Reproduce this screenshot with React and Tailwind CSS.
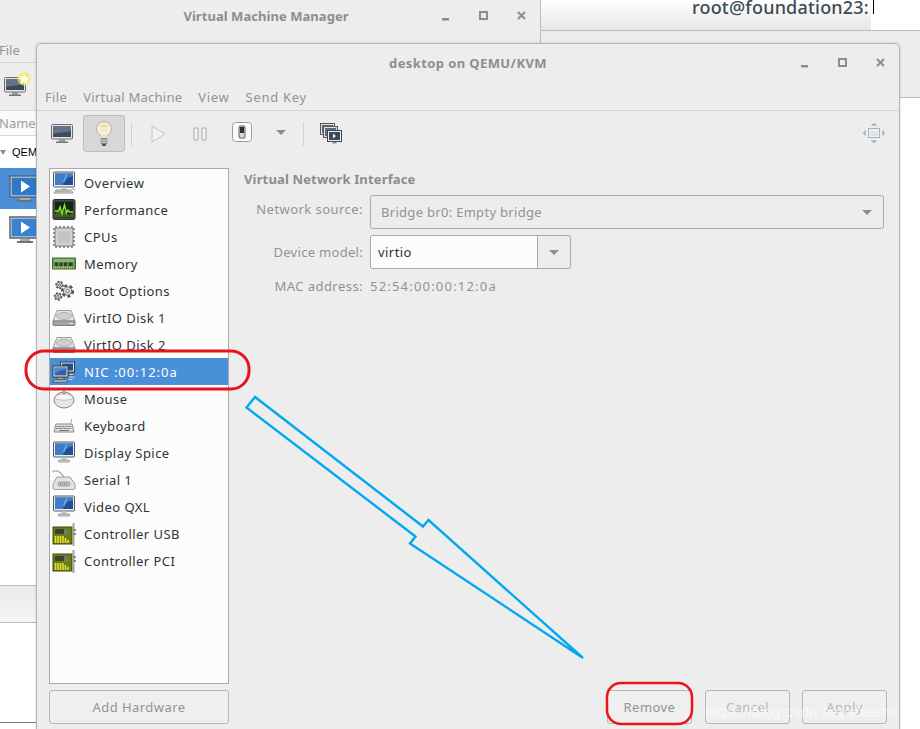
import React from 'react';

const FONT = { fontFamily: '"Noto Sans", "Open Sans", sans-serif' };

/* ---- icons ---- */
const MonitorDark = () => (
  <svg width="24" height="22" viewBox="0 0 24 22">
    <rect x="1.5" y="1.5" width="21" height="14.5" rx="1" fill="#e4e6e8" stroke="#6a6e70" />
    <rect x="3" y="3" width="18" height="11" fill="#3d4a5e" />
    <path d="M3 3h18v5c-6 2-12 1-18 3z" fill="#64738a" />
    <rect x="9" y="16.5" width="6" height="2" fill="#8b8f90" />
    <rect x="6" y="18.5" width="12" height="1.5" fill="#6f7375" />
  </svg>
);

const MonitorBlue = ({ keyboard }) => (
  <svg width="24" height="24" viewBox="0 0 24 24">
    <rect x="1.5" y="1" width="21" height="15" rx="1" fill="#eceeee" stroke="#55595b" />
    <rect x="3" y="2.5" width="18" height="11.5" fill="#1c4f9c" />
    <path d="M3 2.5h18v3c-6 .5-8 3-10 8.500h-8z" fill="#3f7ccb" />
    <path d="M14 3l-3 8h1.500l3-8z" fill="#79a8e0" />
    <rect x="9.500" y="16.500" width="5" height="2.500" fill="#c9cccc" />
    {keyboard ? (
      <>
        <path d="M4 19h15l2 3H2z" fill="#e2e4e4" stroke="#77797a" strokeWidth=".8" />
        <path d="M4.500 20.500h13.500" stroke="#77797a" strokeWidth="1" strokeDasharray="1 1" />
        <path d="M20 18c2 0 3 .5 3.500 1" stroke="#9a9c9c" fill="none" />
      </>
    ) : (
      <rect x="6.500" y="19" width="11" height="2" rx=".5" fill="#dedfdf" stroke="#77797a" strokeWidth=".7" />
    )}
  </svg>
);

const PerformanceIcon = () => (
  <svg width="24" height="24" viewBox="0 0 24 24">
    <rect x="1" y="1.500" width="22" height="20" rx="1.500" fill="#4a4c4a" stroke="#2c2d2c" />
    <rect x="3" y="3.500" width="18" height="16" fill="#14260f" />
    <path d="M3 16l4-4 3 5 3-5 3 5 5-2v4H3z" fill="#3d7a14" opacity=".8" />
    <path d="M3 13h3.500l1.500-4 2 7 2.500-9 2 8 1.500-3 1.500 2h3.500" stroke="#8ae234" strokeWidth="1.400" fill="none" />
  </svg>
);

const ChipIcon = () => (
  <svg width="24" height="24" viewBox="0 0 24 24">
    <path d="M4 1v22M8 1v22M12 1v22M16 1v22M20 1v22M1 4h22M1 8h22M1 12h22M1 16h22M1 20h22" stroke="#6f726f" strokeWidth="1.500" />
    <rect x="3" y="3" width="18" height="18" rx="1" fill="#d2d3d0" stroke="#7a7c78" />
    <rect x="6" y="6" width="12" height="12" fill="#c5c6c3" />
  </svg>
);

const MemoryIcon = () => (
  <svg width="24" height="14" viewBox="0 0 24 14">
    <rect x=".5" y="1" width="23" height="11" fill="#5f9a4a" stroke="#3f6e30" />
    <rect x="2" y="2" width="20" height="3" fill="#84b86f" />
    <path d="M3 5.500h3v3.500H3zM7.500 5.500h3v3.500h-3zM12 5.500h3v3.500h-3zM16.500 5.500h4v3.500h-4z" fill="#3a3a32" />
    <path d="M1 10.500h22" stroke="#d8c46a" strokeWidth="1.500" strokeDasharray="1 1" />
  </svg>
);

const Gear = ({ cx, cy, r }) => (
  <g>
    <circle cx={cx} cy={cy} r={r} fill="none" stroke="#555753" strokeWidth={r * 0.55} strokeDasharray={`${r * 0.55} ${r * 0.45}`} />
    <circle cx={cx} cy={cy} r={r * 0.82} fill="#d9dad8" stroke="#555753" strokeWidth=".8" />
    <circle cx={cx} cy={cy} r={r * 0.32} fill="#fff" stroke="#555753" strokeWidth=".8" />
  </g>
);

const GearsIcon = () => (
  <svg width="22" height="22" viewBox="0 0 22 22">
    <Gear cx={6.500} cy={5} r={3.400} />
    <Gear cx={5} cy={16.500} r={3.400} />
    <Gear cx={14.500} cy={11} r={5.200} />
  </svg>
);

const DiskIcon = () => (
  <svg width="24" height="18" viewBox="0 0 24 18">
    <path d="M5 1.500h14l4 10.500H1z" fill="#e3e4e2" stroke="#9a9c98" />
    <ellipse cx="12" cy="7" rx="7.500" ry="3.500" fill="#cfd0ce" stroke="#b0b2ae" />
    <path d="M1 12h22v3.500a1 1 0 0 1-1 1H2a1 1 0 0 1-1-1z" fill="#a4a6a2" stroke="#7f817d" />
    <path d="M17 14.500h4" stroke="#e8e8e6" />
  </svg>
);

const NicIcon = () => (
  <svg width="24" height="22" viewBox="0 0 24 22">
    <rect x="8.500" y="1" width="14" height="10" fill="#e6e8e8" stroke="#34383a" />
    <rect x="10" y="2.500" width="11" height="7" fill="#1f4e96" />
    <rect x="1" y="5" width="15" height="11" fill="#eceeee" stroke="#34383a" />
    <rect x="2.500" y="6.500" width="12" height="8" fill="#2a62ae" />
    <path d="M2.500 6.500h12v2c-5 0-8 2-12 4z" fill="#4f88d0" />
    <path d="M5 16.500h7v1.500H5zM1.500 19h14v2h-14z" fill="#e4e6e6" stroke="#34383a" strokeWidth=".7" />
    <path d="M17 12.500h5v2h-5z" fill="#e4e6e6" stroke="#34383a" strokeWidth=".7" />
    <path d="M16.500 16h6M16.500 18.500h4" stroke="#d8dada" strokeWidth="1.200" fill="none" />
  </svg>
);

const MouseIcon = () => (
  <svg width="22" height="20" viewBox="0 0 22 20">
    <ellipse cx="11" cy="11" rx="10" ry="8" fill="#e6e6e2" stroke="#8a8c88" />
    <path d="M1.500 9c3-5.500 16-5.500 19 0-5 3-14 3-19 0z" fill="#f6f6f4" stroke="#a8aaa6" strokeWidth=".7" />
    <path d="M11 1v5" stroke="#7d9ac0" strokeWidth="1.200" />
  </svg>
);

const KeyboardIcon = () => (
  <svg width="22" height="16" viewBox="0 0 22 16">
    <path d="M17 5c2-1 2-3 1-4" stroke="#a8aaa6" fill="none" />
    <path d="M3 6h16l2 8H1z" fill="#e0e1de" stroke="#8a8c88" />
    <path d="M3.500 8.500h15M3 10.500h16" stroke="#63655f" strokeWidth="1.200" strokeDasharray="1 .6" />
    <path d="M6 12.500h10" stroke="#7a7c78" strokeWidth="1" />
  </svg>
);

const SerialIcon = () => (
  <svg width="24" height="22" viewBox="0 0 24 22">
    <path d="M0 3c5-3 9 0 13 7" stroke="#b6b8b4" strokeWidth="1.500" fill="none" />
    <path d="M5 8h13l5 7v4a1.500 1.500 0 0 1-1.500 1.500h-19A1.500 1.500 0 0 1 1 19v-4z" fill="#e2e3e0" stroke="#9a9c98" />
    <rect x="6" y="13" width="12" height="4" rx="1.500" fill="#c0c4c8" stroke="#7b8aa0" strokeWidth=".7" />
    <path d="M8 15h8" stroke="#5b6b8a" strokeDasharray="1 1" />
  </svg>
);

const ControllerIcon = () => (
  <svg width="24" height="24" viewBox="0 0 24 24">
    <rect x="1" y="5" width="19" height="17" fill="#6f7c10" stroke="#434a0c" />
    <rect x="3" y="7" width="9" height="5" rx="1" fill="#3c3e38" />
    <path d="M12 8h4v1.500h-4zM12 10.500h4V12h-4z" fill="#5b82b0" />
    <path d="M3.500 21v-7M6 21v-7M8.500 21v-7M11 21v-7M13.500 21v-5M16 21v-3" stroke="#e2e230" strokeWidth="1.600" />
    <path d="M21.500 1v23" stroke="#a4a6a2" strokeWidth="2" />
    <path d="M21.500 8h2.500M21.500 12h2.500" stroke="#6a6c68" strokeWidth="1.500" />
  </svg>
);

const BulbIcon = () => (
  <svg width="18" height="28" viewBox="0 0 18 28">
    <circle cx="9" cy="9" r="7.500" fill="#f2efd4" stroke="#b4b6aa" />
    <path d="M6 7q3-3 6 0" stroke="#e6d85a" strokeWidth="1.600" fill="none" />
    <path d="M6 15h6v3H6z" fill="#e4e4dc" />
    <rect x="5.500" y="18" width="7" height="6" rx="1" fill="#8a8c88" />
    <path d="M5.500 20h7M5.500 22h7" stroke="#d6d6d2" />
    <rect x="7" y="24" width="4" height="2" fill="#55575a" />
  </svg>
);

const SwitchIcon = () => (
  <svg width="20" height="20" viewBox="0 0 20 20">
    <rect x=".5" y=".5" width="19" height="19" rx="3" fill="#fafafa" stroke="#9a9c9c" />
    <rect x="7" y="4" width="6" height="12" rx="1" fill="#d6d6d4" stroke="#5c5e5e" />
    <rect x="8" y="5" width="4" height="6" fill="#2e3032" />
  </svg>
);

const MultiMonitorIcon = () => (
  <svg width="22" height="22" viewBox="0 0 22 22">
    <rect x=".5" y=".5" width="14" height="11" fill="#dfe1e3" stroke="#55595b" />
    <rect x="2" y="2" width="11" height="8" fill="#5d6a80" />
    <rect x="3.500" y="3.500" width="14" height="11" fill="#dfe1e3" stroke="#55595b" />
    <rect x="5" y="5" width="11" height="8" fill="#5d6a80" />
    <rect x="7.500" y="7.500" width="14" height="11" fill="#eceeee" stroke="#44484a" />
    <rect x="9" y="9" width="11" height="8" fill="#3d4a5e" />
    <path d="M13 10.500l3 2.500-3 2.500z" fill="#e8ecf0" />
    <rect x="12.500" y="19" width="4" height="1.500" fill="#8b8f90" />
  </svg>
);

const FullscreenIcon = () => (
  <svg width="24" height="22" viewBox="0 0 24 22">
    <rect x="6.500" y="6.500" width="11" height="9" fill="#f2f2f2" stroke="#a3b0c4" />
    <rect x="8" y="9" width="8" height="5" fill="#dfe2e6" />
    <path d="M12 1l3 2.500H9zM12 21l-3-2.500h6zM1 11l2.500-3v6zM23 11l-2.500 3V8z" fill="#93a8cc" stroke="#b4c2da" strokeWidth=".6" />
  </svg>
);

const PlayGlyph = ({ bg }) => (
  <svg width="32" height="28" viewBox="0 0 32 28">
    <rect x="1" y="1" width="30" height="21" fill="#e8f0f6" stroke="#5d6264" strokeWidth="1.500" />
    <rect x="2.500" y="2.500" width="27" height="18" fill={bg} />
    <path d="M12 5.500l9 6-9 6z" fill="#fff" />
    <rect x="11" y="23" width="10" height="2" fill="#a8acae" />
    <rect x="8" y="25" width="16" height="2" fill="#6f7375" />
  </svg>
);

const NewVmStar = () => (
  <svg width="14" height="14" viewBox="0 0 14 14">
    <circle cx="7" cy="7" r="6.500" fill="#eef04a" opacity=".75" />
    <path d="M7 1.500l1.700 3.600 3.800.5-2.800 2.600.7 3.800L7 10.200l-3.400 1.800.7-3.800L1.500 5.600l3.800-.5z" fill="#fffde8" />
  </svg>
);

const WindowButtons = () => (
  <svg width="84" height="14" viewBox="0 0 84 14" className="shrink-0">
    <rect x="0" y="9" width="7" height="2.500" fill="#8b8e8e" />
    <rect x="38" y="3" width="7" height="7" fill="none" stroke="#8b8e8e" strokeWidth="2" />
    <path d="M76 3l7 7M83 3l-7 7" stroke="#8b8e8e" strokeWidth="2" />
  </svg>
);

const Caret = ({ color = '#8b8e8e' }) => (
  <svg width="12" height="7" viewBox="0 0 12 7">
    <path d="M1 1h10L6 6z" fill={color} />
  </svg>
);

/* ---- data ---- */
const hardware = [
  { label: 'Overview', icon: <MonitorBlue keyboard /> },
  { label: 'Performance', icon: <PerformanceIcon /> },
  { label: 'CPUs', icon: <ChipIcon /> },
  { label: 'Memory', icon: <MemoryIcon /> },
  { label: 'Boot Options', icon: <GearsIcon /> },
  { label: 'VirtIO Disk 1', icon: <DiskIcon /> },
  { label: 'VirtIO Disk 2', icon: <DiskIcon /> },
  { label: 'NIC :00:12:0a', icon: <NicIcon />, active: true },
  { label: 'Mouse', icon: <MouseIcon /> },
  { label: 'Keyboard', icon: <KeyboardIcon /> },
  { label: 'Display Spice', icon: <MonitorBlue /> },
  { label: 'Serial 1', icon: <SerialIcon /> },
  { label: 'Video QXL', icon: <MonitorBlue /> },
  { label: 'Controller USB', icon: <ControllerIcon /> },
  { label: 'Controller PCI', icon: <ControllerIcon /> },
];

const HardwareRow = ({ label, icon, active }) => (
  <div className={`flex h-[27px] items-center ${active ? 'bg-[#4a90d9] text-white' : 'text-[#2e3436]'}`}>
    <div className="mr-[6px] flex w-[28px] shrink-0 justify-center">{icon}</div>
    <span className={`pt-[2px] text-[13px] ${active ? 'tracking-[1px]' : 'tracking-[0.45px]'}`}>{label}</span>
  </div>
);

const DisabledButton = ({ label, width, text = 'text-[#8f9494]' }) => (
  <div className={`flex h-[34px] items-center justify-center rounded-[3px] border border-[#b6b6b3] bg-[#efefef] pt-[2px] text-[13px] tracking-[0.45px] ${width} ${text}`}>
    {label}
  </div>
);

const ToolSep = () => <div className="h-[24px] w-px bg-[#d2d2d0]" />;

export default function App() {
  return (
    <div className="relative h-[729px] w-[920px] overflow-hidden bg-white" style={FONT}>
      {/* terminal window behind everything */}
      <div className="absolute inset-x-0 top-0 flex flex-col">
        <div className="flex h-[30px] justify-end bg-gradient-to-b from-white to-[#e6e6e6]">
          <div className="w-[179px] shrink-0 whitespace-nowrap text-[18px] font-medium leading-[14px] tracking-[0.2px] text-[#3c4b54]">root@foundation23:</div>
          <div className="w-[49px] bg-white">
            <div className="ml-[2px] h-[14px] w-px bg-black" />
          </div>
        </div>
        <div className="h-[68px] border-y border-[#b9bcbc] bg-[#ededed]" />
      </div>

      {/* second window peeking out on the left, below the manager */}
      <div className="absolute left-0 top-[585px] flex h-[138px] w-[37px] flex-col border-b border-[#77797a]">
        <div className="h-[38px] border-y border-[#b9bcbc] bg-gradient-to-b from-[#ebebeb] to-[#f6f6f6]" />
        <div className="flex-1 bg-white" />
      </div>

      {/* Virtual Machine Manager window */}
      <div className="absolute left-0 top-0 flex h-[585px] w-[541px] flex-col border-r border-[#b9bcbc] bg-[#ededed]">
        <div className="relative flex h-[33px] items-center justify-center pr-[8px] text-[13px] font-bold tracking-[0.05px] text-[#8a8f8f]">
          Virtual Machine Manager
          <div className="absolute right-[14px] top-[9px]"><WindowButtons /></div>
        </div>
        <div className="flex h-[30px] items-center border-b border-[#d4d4d2] pt-[6px] text-[13px] text-[#8f9494]">
          <span className="-ml-px">File</span>
        </div>
        <div className="flex h-[47px] items-center pl-[3px]">
          <div className="relative">
            <MonitorDark />
            <div className="absolute -right-[4px] -top-[4px]"><NewVmStar /></div>
          </div>
        </div>
        <div className="flex h-[26px] items-center border-y border-[#d8d8d6] bg-[#fafafa] pt-[2px] text-[13px] text-[#9a9e9e]">
          <span className="-ml-px">Name</span>
        </div>
        <div className="flex h-[32px] items-center gap-[6px] bg-white text-[11px] text-black" style={{ fontFamily: '"Liberation Sans", sans-serif' }}>
          <svg width="6" height="5" viewBox="0 0 6 5" className="shrink-0"><path d="M0 0h6L3 5z" fill="#8b8e8e" /></svg>
          <span>QEMU</span>
        </div>
        <div className="flex h-[41px] items-center bg-[#4a90d9] pl-[9px]"><PlayGlyph bg="#2f78c8" /></div>
        <div className="flex h-[41px] items-center bg-white pl-[9px]"><PlayGlyph bg="#3a82cf" /></div>
        <div className="flex-1 bg-white" />
      </div>

      {/* desktop on QEMU/KVM dialog */}
      <div className="absolute left-[36px] top-[43px] flex h-[700px] w-[864px] flex-col rounded-t-[5px] border border-[#b4b6b6] bg-[#ededed] shadow-[0_0_3px_rgba(0,0,0,0.15)]">
        <div className="relative flex h-[40px] shrink-0 items-center justify-center text-[13px] font-bold tracking-[0.4px] text-[#8a8f8f]">
          desktop on QEMU/KVM
          <div className="absolute right-[14px] top-[12px]"><WindowButtons /></div>
        </div>
        <div className="flex h-[27px] shrink-0 items-center gap-[16px] border-b border-[#d4d4d2] pl-[8px] pt-[2px] text-[13px] tracking-[0.25px] text-[#8f9494]">
          <span className="tracking-[0.35px]">File</span>
          <span>Virtual Machine</span>
          <span className="tracking-[0.7px]">View</span>
          <span className="tracking-[0.7px]">Send Key</span>
        </div>

        {/* toolbar */}
        <div className="flex h-[57px] shrink-0 items-start pt-[4px]">
          <div className="ml-[13px] mt-[8px]"><MonitorDark /></div>
          <div className="ml-[9px] flex h-[37px] w-[42px] items-center justify-center rounded-[3px] border border-[#bcbcba] bg-[#d8d8d8]"><BulbIcon /></div>
          <div className="ml-[6px] mt-[7px]"><ToolSep /></div>
          <svg width="16" height="18" viewBox="0 0 16 18" className="ml-[19px] mt-[10px]"><path d="M1 1l13 8-13 8z" fill="#f2f2f2" stroke="#c4c6c6" /></svg>
          <svg width="14" height="14" viewBox="0 0 14 14" className="ml-[26px] mt-[12px]"><path d="M1 1h4v12H1zM9 1h4v12H9z" fill="#f4f4f4" stroke="#a8aaaa" /></svg>
          <div className="ml-[25px] mt-[7px]"><SwitchIcon /></div>
          <div className="ml-[23px] mt-[14px]"><Caret /></div>
          <div className="ml-[16px] mt-[7px]"><ToolSep /></div>
          <div className="ml-[16px] mt-[8px]"><MultiMonitorIcon /></div>
          <div className="ml-auto mr-[13px] mt-[7px]"><FullscreenIcon /></div>
        </div>

        {/* body */}
        <div className="flex min-h-0 flex-1 pl-[12px] pr-[15px]">
          <div className="flex w-[180px] shrink-0 flex-col gap-[6px]">
            <div className="flex h-[516px] flex-col border border-[#a8a9a8] bg-[#fcfcfc]">
              {hardware.map((item) => (
                <HardwareRow key={item.label} {...item} />
              ))}
            </div>
            <DisabledButton label="Add Hardware" width="w-[180px]" />
          </div>

          <div className="flex h-[556px] flex-1 flex-col pl-[15px]">
            <div className="flex h-[27px] items-center pb-[4px] text-[13px] font-bold tracking-[0.15px] text-[#8a8f8f]">Virtual Network Interface</div>
            <div className="flex items-center gap-[7px]">
              <span className="w-[119px] pb-[4px] text-right text-[13px] tracking-[0.45px] text-[#8f9494]">Network source:</span>
              <div className="flex h-[34px] flex-1 items-center justify-between rounded-[3px] border border-[#a8a9a8] bg-[#ededed] pl-[10px] pr-[10px] text-[13px] tracking-[0.3px] text-[#8f9494]">
                <span className="pt-[2px]">Bridge br0: Empty bridge</span>
                <Caret />
              </div>
            </div>
            <div className="mt-[6px] flex items-center gap-[7px]">
              <span className="w-[119px] pt-[2px] text-right text-[13px] tracking-[0.3px] text-[#8f9494]">Device model:</span>
              <div className="flex h-[34px] w-[201px] items-center rounded-[3px] border border-[#a8a9a8]">
                <div className="flex h-full flex-1 items-center rounded-l-[3px] bg-[#fcfcfc] pl-[7px] pt-[2px] text-[13px] tracking-[0.45px] text-[#2e3436]">virtio</div>
                <div className="flex h-full w-[33px] items-center justify-center border-l border-[#a8a9a8]"><Caret /></div>
              </div>
            </div>
            <div className="mt-[8px] flex h-[18px] items-center gap-[7px] pt-[2px] text-[13px] tracking-[0.45px] text-[#8f9494]">
              <span className="w-[119px] text-right">MAC address:</span>
              <span className="tracking-[1.2px]">52:54:00:00:12:0a</span>
            </div>

            {/* action buttons */}
            <div className="-mr-[3px] mt-auto flex justify-end">
              <DisabledButton label="Remove" width="w-[85px]" />
              <div className="ml-[13px]"><DisabledButton label="Cancel" width="w-[85px]" text="text-[#b4b6b6]" /></div>
              <div className="ml-[12px]"><DisabledButton label="Apply" width="w-[85px]" text="text-[#b4b6b6]" /></div>
            </div>
          </div>
        </div>
      </div>

      {/* annotations drawn on top of the screenshot */}
      <svg width="920" height="729" viewBox="0 0 920 729" className="absolute left-0 top-0">
        <rect x="26" y="351" width="223" height="38" rx="18" fill="none" stroke="#e8141c" strokeWidth="3" />
        <rect x="607" y="683" width="85" height="41" rx="14" fill="none" stroke="#e8141c" strokeWidth="2.500" />
        <polygon
          points="255,397 246.500,407.500 415.500,536.500 410,543.500 583,658 428.500,520 423,526.500"
          fill="none"
          stroke="#00a8f0"
          strokeWidth="2.400"
        />
      </svg>
      <div className="absolute left-[705px] top-[701px] whitespace-nowrap text-[15px] tracking-[0.2px] text-white/60" style={{ fontFamily: '"Liberation Sans", sans-serif' }}>
        https://blog.csdn.net/sheena
      </div>
    </div>
  );
}
